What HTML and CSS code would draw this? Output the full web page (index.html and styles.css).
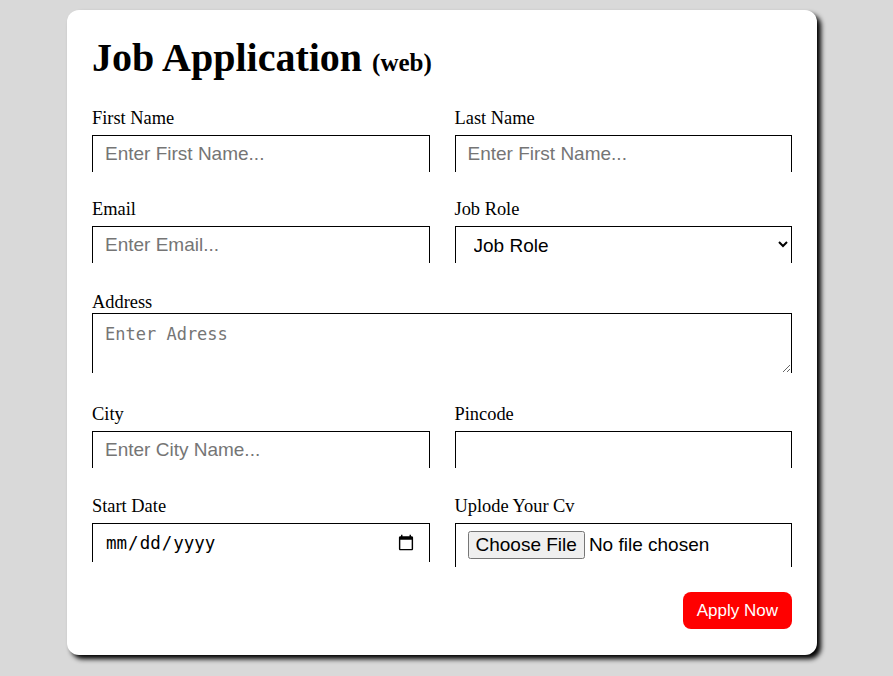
FILE: index.html
```html
<!DOCTYPE html>
<html lang="en">
<head>
<meta charset="utf-8">
<title>Job Application</title>
<link rel="stylesheet" href="styles.css">
</head>
<body>
<div class="card">
  <h1 class="title">Job Application <span class="sub">(web)</span></h1>
  <form class="form">
    <div class="field">
      <label class="label">First Name</label>
      <input class="control" type="text" placeholder="Enter First Name...">
    </div>
    <div class="field">
      <label class="label">Last Name</label>
      <input class="control" type="text" placeholder="Enter First Name...">
    </div>
    <div class="field">
      <label class="label">Email</label>
      <input class="control" type="email" placeholder="Enter Email...">
    </div>
    <div class="field">
      <label class="label">Job Role</label>
      <select class="control select">
        <option>Job Role</option>
      </select>
    </div>
    <div class="field wide address">
      <label class="label label-tight">Address</label>
      <textarea class="control area" placeholder="Enter Adress"></textarea>
    </div>
    <div class="field city">
      <label class="label">City</label>
      <input class="control" type="text" placeholder="Enter City Name...">
    </div>
    <div class="field city">
      <label class="label">Pincode</label>
      <input class="control" type="text">
    </div>
    <div class="field last">
      <label class="label">Start Date</label>
      <input class="control date" type="date">
    </div>
    <div class="field last">
      <label class="label">Uplode Your Cv</label>
      <input class="control file" type="file">
    </div>
    <div class="actions wide">
      <button class="apply" type="button">Apply Now</button>
    </div>
  </form>
</div>
</body>
</html>
```
FILE: styles.css
```css
html, body {
  margin: 0;
  padding: 0;
}
body {
  background: #d9d9d9;
  font-family: "Liberation Serif", "Times New Roman", serif;
  color: #000;
  min-height: 676px;
}
.card {
  box-sizing: border-box;
  width: 750px;
  margin: 10px 0 0 67px;
  padding: 25px 25px 26px;
  background: #fff;
  border-radius: 12px;
  box-shadow: 4px 4px 5px #000;
}
.title {
  margin: 0 0 26px;
  font-size: 40px;
  font-weight: bold;
  line-height: 46px;
}
.sub {
  font-size: 25px;
  line-height: 1;
}
.form {
  display: grid;
  grid-template-columns: 1fr 1fr;
  column-gap: 25px;
  row-gap: 26px;
}
.field {
  display: flex;
  flex-direction: column;
}
.wide {
  grid-column: 1 / -1;
}
.address {
  margin-top: 2px;
}
.city {
  margin-top: 4px;
}
.last {
  margin-top: 1px;
}
.label {
  font-size: 18.4px;
  line-height: 21px;
  padding-top: 1px;
  margin-bottom: 6px;
}
.label-tight {
  margin-bottom: 0;
}
.control {
  box-sizing: border-box;
  width: 100%;
  margin: 0;
  border: 1px solid #000;
  border-bottom: none;
  border-radius: 0;
  padding: 7px 12px;
  font-family: "Liberation Sans", Arial, sans-serif;
  font-size: 19px;
  color: #000;
  background: #fff;
  outline: none;
}
.control::placeholder {
  color: #757575;
}
.select {
  height: 37px;
  padding: 0 12px 0 14px;
}
.area {
  height: 60px;
  padding-top: 10px;
  font-family: "DejaVu Sans Mono", monospace;
  font-size: 17px;
  resize: vertical;
}
.date {
  font-family: "DejaVu Sans Mono", monospace;
  font-size: 17.5px;
  height: 39px;
}
.file {
  height: 44px;
}
.actions {
  display: flex;
  justify-content: flex-end;
  margin-top: -1px;
}
.apply {
  border: none;
  border-radius: 8px;
  background: #ff0000;
  color: #fff;
  font-family: "Liberation Sans", Arial, sans-serif;
  font-size: 17px;
  padding: 0 14px;
  height: 37px;
}
```
